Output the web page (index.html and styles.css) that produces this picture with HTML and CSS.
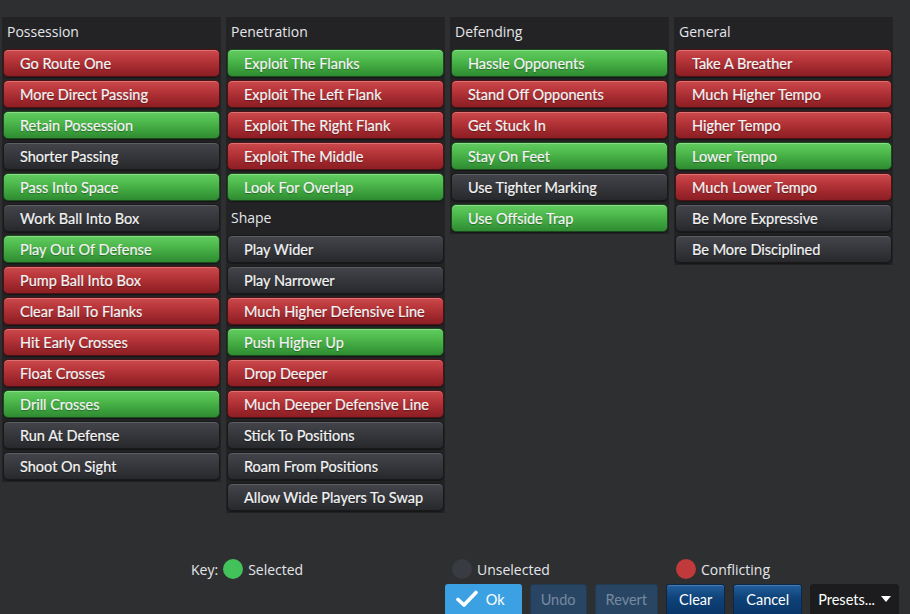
FILE: index.html
```html
<!DOCTYPE html>
<html lang="en">
<head>
    <meta charset="UTF-8">
    <meta name="viewport" content="width=device-width, initial-scale=1.0">
    <title>Team Instructions</title>
    <link rel="stylesheet" href="styles.css">
</head>
<body>
    <div class="page">
        <div class="columns">
            <div class="panel">
                <div class="panel-title">Possession</div>
                <button class="tactic red">Go Route One</button>
                <button class="tactic red">More Direct Passing</button>
                <button class="tactic green">Retain Possession</button>
                <button class="tactic dark">Shorter Passing</button>
                <button class="tactic green">Pass Into Space</button>
                <button class="tactic dark">Work Ball Into Box</button>
                <button class="tactic green">Play Out Of Defense</button>
                <button class="tactic red">Pump Ball Into Box</button>
                <button class="tactic red">Clear Ball To Flanks</button>
                <button class="tactic red">Hit Early Crosses</button>
                <button class="tactic red">Float Crosses</button>
                <button class="tactic green">Drill Crosses</button>
                <button class="tactic dark">Run At Defense</button>
                <button class="tactic dark">Shoot On Sight</button>
            </div>

            <div class="panel">
                <div class="panel-title">Penetration</div>
                <button class="tactic green">Exploit The Flanks</button>
                <button class="tactic red">Exploit The Left Flank</button>
                <button class="tactic red">Exploit The Right Flank</button>
                <button class="tactic red">Exploit The Middle</button>
                <button class="tactic green">Look For Overlap</button>
                <div class="panel-title sub">Shape</div>
                <button class="tactic dark">Play Wider</button>
                <button class="tactic dark">Play Narrower</button>
                <button class="tactic red">Much Higher Defensive Line</button>
                <button class="tactic green">Push Higher Up</button>
                <button class="tactic red">Drop Deeper</button>
                <button class="tactic red">Much Deeper Defensive Line</button>
                <button class="tactic dark">Stick To Positions</button>
                <button class="tactic dark">Roam From Positions</button>
                <button class="tactic dark">Allow Wide Players To Swap</button>
            </div>

            <div class="panel">
                <div class="panel-title">Defending</div>
                <button class="tactic green">Hassle Opponents</button>
                <button class="tactic red">Stand Off Opponents</button>
                <button class="tactic red">Get Stuck In</button>
                <button class="tactic green">Stay On Feet</button>
                <button class="tactic dark">Use Tighter Marking</button>
                <button class="tactic green">Use Offside Trap</button>
            </div>

            <div class="panel">
                <div class="panel-title">General</div>
                <button class="tactic red">Take A Breather</button>
                <button class="tactic red">Much Higher Tempo</button>
                <button class="tactic red">Higher Tempo</button>
                <button class="tactic green">Lower Tempo</button>
                <button class="tactic red">Much Lower Tempo</button>
                <button class="tactic dark">Be More Expressive</button>
                <button class="tactic dark">Be More Disciplined</button>
            </div>
        </div>

        <div class="key">
            <div class="key-item">
                <span>Key:</span>
                <span class="dot dot-green"></span>
                <span>Selected</span>
            </div>
            <div class="key-item">
                <span class="dot dot-dark"></span>
                <span>Unselected</span>
            </div>
            <div class="key-item">
                <span class="dot dot-red"></span>
                <span>Conflicting</span>
            </div>
        </div>

        <div class="actions">
            <button class="action ok">
                <svg width="22" height="18" viewBox="0 0 22 18">
                    <path d="M2 9.5 L8 15 L20 2.5" fill="none" stroke="#fff" stroke-width="3.6" stroke-linecap="round" stroke-linejoin="round"/>
                </svg>
                Ok
            </button>
            <button class="action muted">Undo</button>
            <button class="action muted">Revert</button>
            <button class="action blue">Clear</button>
            <button class="action blue">Cancel</button>
            <button class="action presets">Presets... <span class="caret"></span></button>
        </div>
    </div>
</body>
</html>
```

FILE: styles.css
```css
body {
    margin: 0;
    background: #2e2f31;
    overflow: hidden;
}
.page {
    height: 614px;
    padding: 17px 0 0 2px;
    box-sizing: border-box;
}
.columns {
    display: grid;
    grid-template-columns: repeat(4, 219px);
    column-gap: 5px;
    align-items: start;
    height: 542px;
}
.panel {
    background: #232325;
    padding: 0 1px 2px 1px;
    display: flex;
    flex-direction: column;
    gap: 3px;
}
.panel-title {
    height: 29px;
    line-height: 29px;
    padding-left: 4px;
    font-family: "Open Sans", sans-serif;
    font-size: 14px;
    color: #e4e6ea;
}
.panel-title.sub {
    height: 28px;
    line-height: 27px;
}
.tactic {
    height: 28px;
    margin: 0;
    padding: 0 0 0 16px;
    text-align: left;
    font-family: "Lato", sans-serif;
    font-size: 14.5px;
    color: #f4f4f4;
    border-radius: 5px;
    border: 1px solid #17181a;
    text-shadow: 0 1px 1px rgba(0,0,0,0.35);
    -webkit-text-stroke: 0.2px #f4f4f4;
    cursor: pointer;
}
.tactic.red {
    background: linear-gradient(#cb4a4c, #b9373b 35%, #9c262b 75%, #8c1f24);
    border-color: #4e1216;
    box-shadow: inset 0 1px 0 rgba(255,190,190,0.35), 0 1px 1px rgba(0,0,0,0.4);
}
.tactic.green {
    background: linear-gradient(#62cc60, #4fba4d 35%, #3a9e3b 75%, #2f8b32);
    border-color: #1b4a1c;
    box-shadow: inset 0 1px 0 rgba(210,255,210,0.35), 0 1px 1px rgba(0,0,0,0.4);
}
.tactic.dark {
    background: linear-gradient(#43454b, #393b40 35%, #2e3034 75%, #27282c);
    border-color: #18191b;
    box-shadow: inset 0 1px 0 rgba(255,255,255,0.14), 0 1px 1px rgba(0,0,0,0.4);
}
.key {
    display: grid;
    grid-template-columns: 261px 224px auto;
    padding-left: 189px;
    height: 20px;
    font-family: "Open Sans", sans-serif;
    font-size: 14px;
    color: #e4e6ea;
}
.key-item {
    display: flex;
    align-items: center;
    gap: 5px;
}
.dot {
    width: 20px;
    height: 20px;
    border-radius: 50%;
}
.dot-green {
    background: #43c15a;
}
.dot-dark {
    background: #393b43;
}
.dot-red {
    background: #c0393b;
}
.actions {
    display: flex;
    justify-content: flex-end;
    gap: 8px;
    margin-top: 5px;
    padding-right: 11px;
}
.action {
    height: 34px;
    padding: 0 10px 4px;
    font-family: "Lato", sans-serif;
    font-size: 14.5px;
    color: #fff;
    border: 1px solid transparent;
    border-radius: 3px;
    display: flex;
    align-items: center;
    gap: 8px;
    cursor: pointer;
}
.action.ok {
    background: #3ba1e3;
    padding: 0 16px 4px 10px;
}
.action.muted {
    background: #284663;
    border-color: #213a53;
    color: #7789a0;
}
.action.blue {
    padding: 0 12px 4px;
    background: linear-gradient(#235f9c, #0f4379 40%, #073366);
    border-color: #0a2747;
    box-shadow: inset 0 1px 0 rgba(150,200,255,0.3);
}
.action.presets {
    padding: 0 7px 4px;
    background: #1c1c1e;
    border-color: #1c1c1e;
    gap: 6px;
}
.caret {
    width: 0;
    height: 0;
    border-left: 5px solid transparent;
    border-right: 5px solid transparent;
    border-top: 6px solid #fff;
}
```
